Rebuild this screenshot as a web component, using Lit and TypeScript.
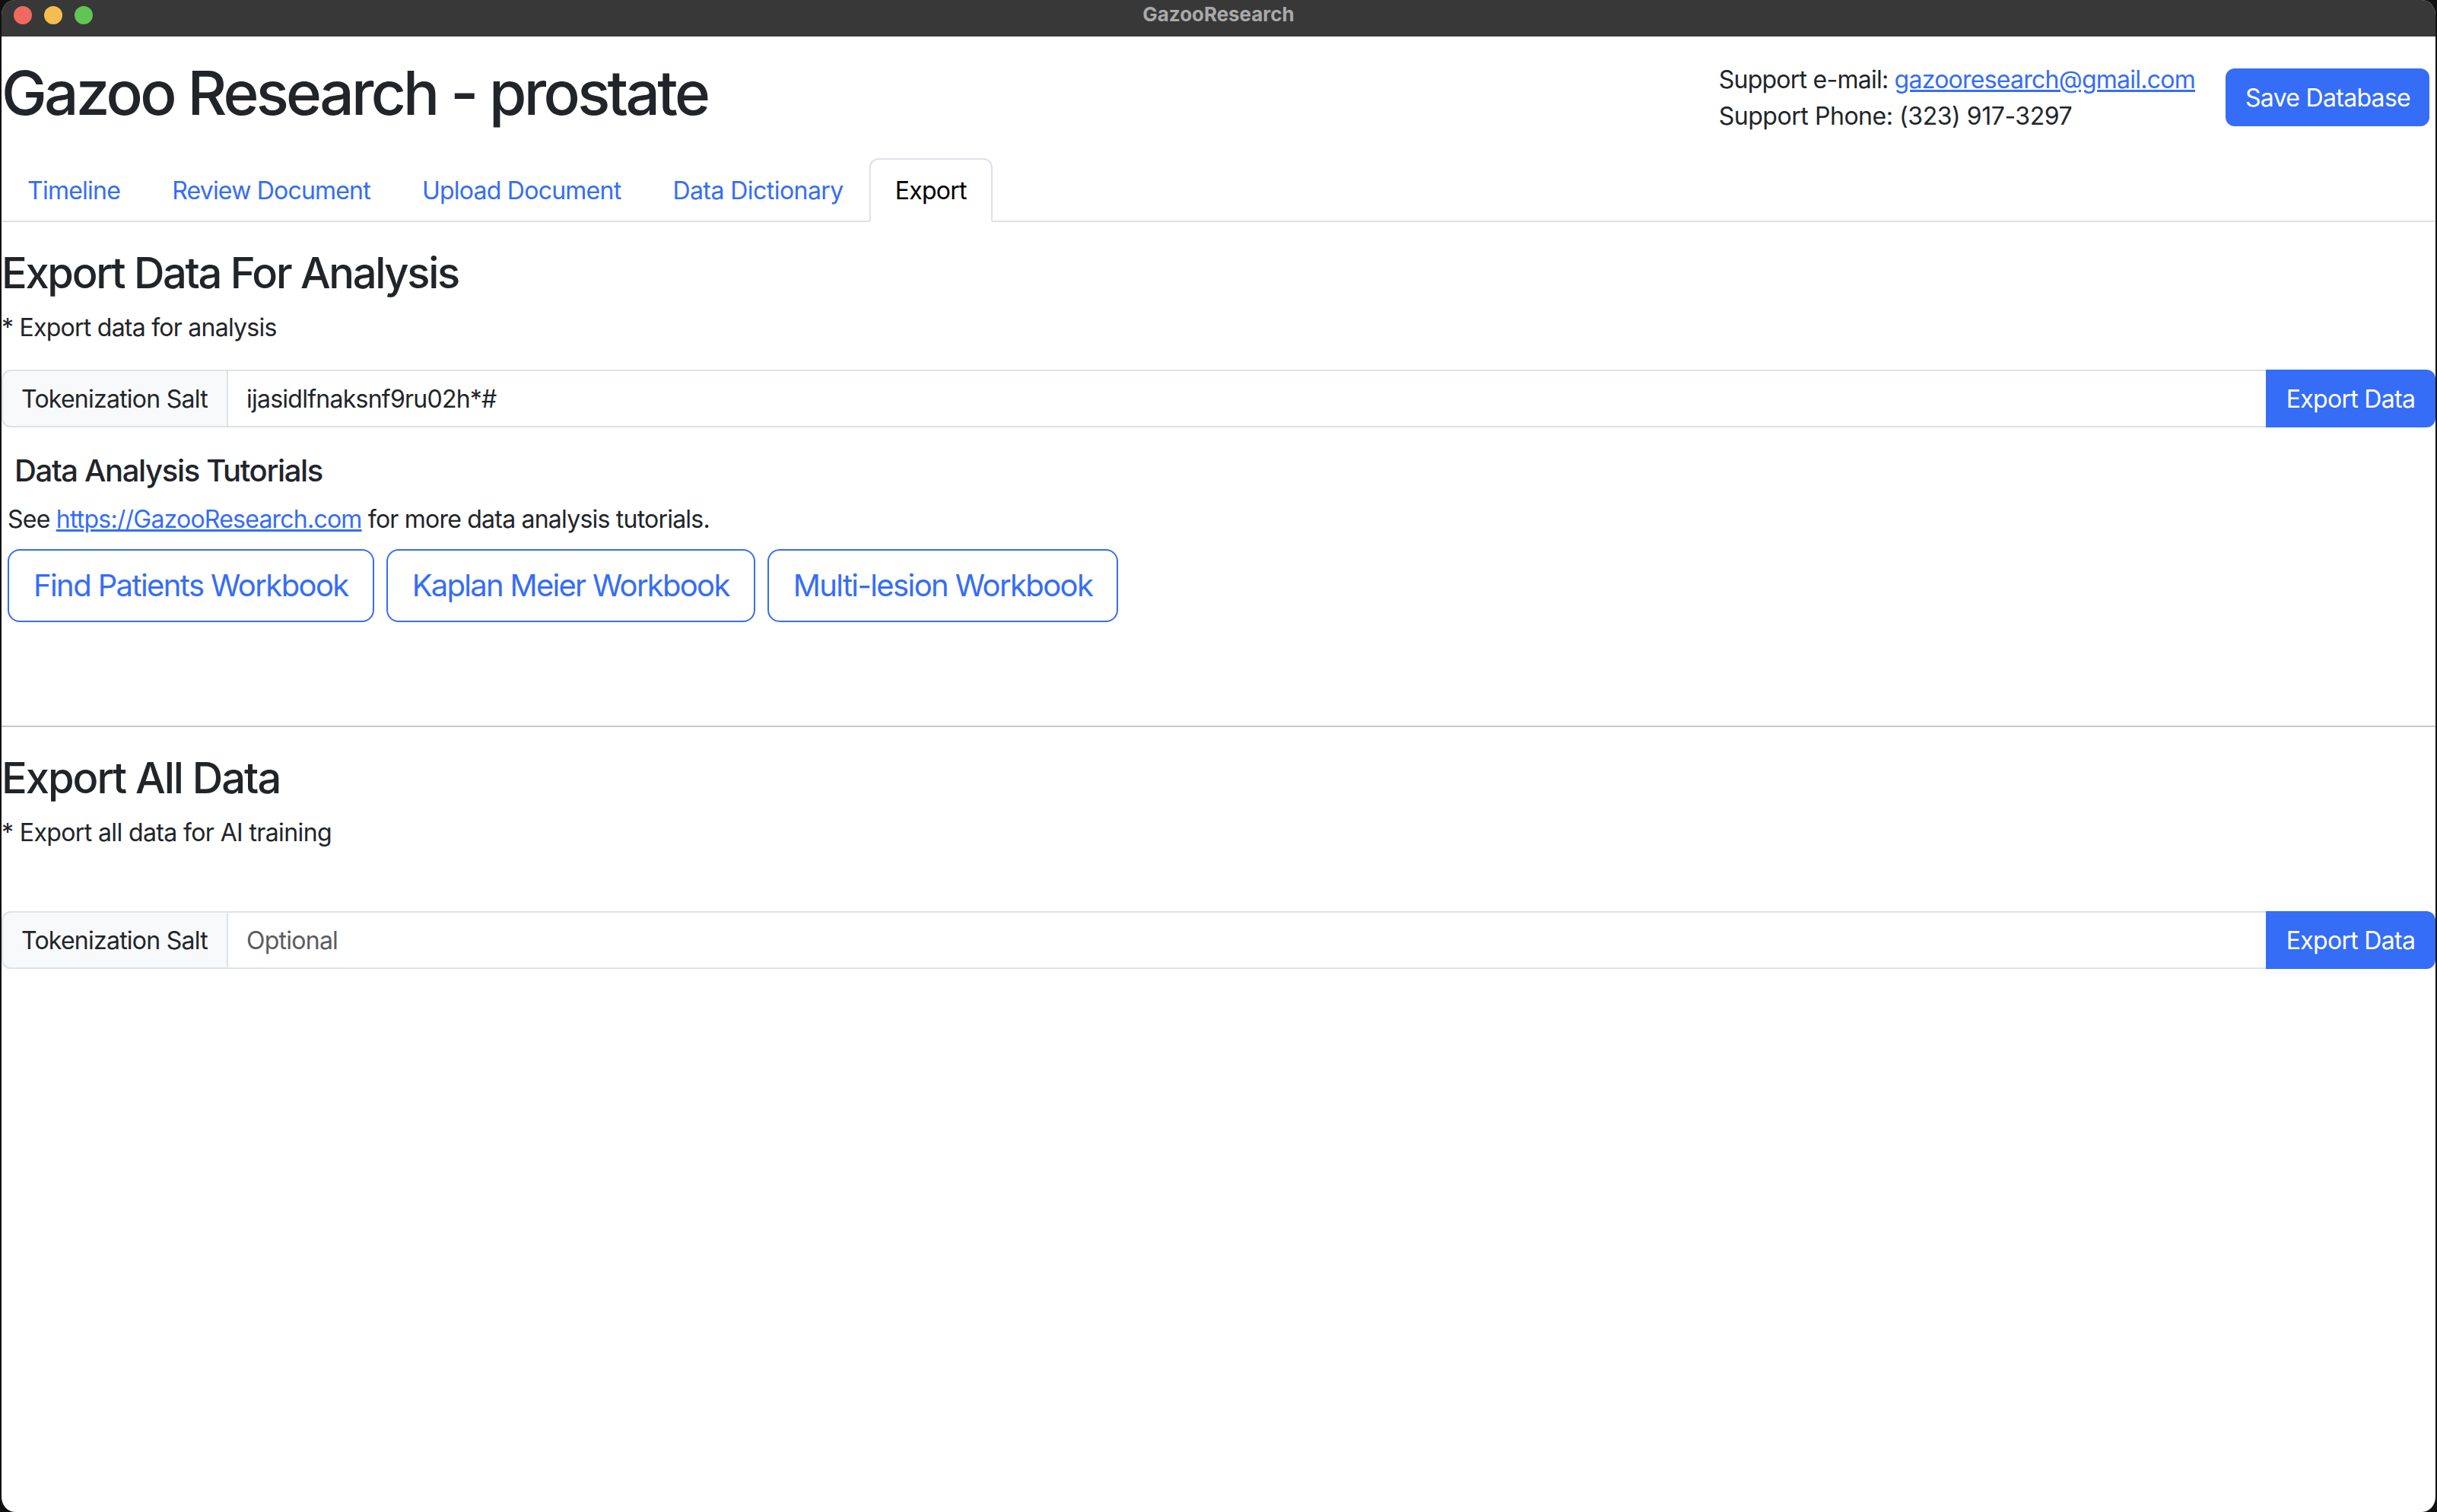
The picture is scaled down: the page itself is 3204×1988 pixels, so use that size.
import { LitElement, css, html } from 'lit'
import { customElement } from 'lit/decorators.js'

const TABS = ['Timeline', 'Review Document', 'Upload Document', 'Data Dictionary', 'Export']
const WORKBOOKS = ['Find Patients Workbook', 'Kaplan Meier Workbook', 'Multi-lesion Workbook']

@customElement('app-root')
export class AppRoot extends LitElement {

    render() {
        return html`
            <div class="window">
                <div class="title-bar">
                    <div class="lights">
                        <span class="light red"></span>
                        <span class="light yellow"></span>
                        <span class="light green"></span>
                    </div>
                    <div class="title">GazooResearch</div>
                </div>

                <header class="header">
                    <h1>Gazoo Research - prostate</h1>
                    <div class="support">
                        <div>Support e-mail: <a href="#">gazooresearch@gmail.com</a></div>
                        <div class="phone">Support Phone: (323) 917-3297</div>
                    </div>
                    <button class="btn save">Save Database</button>
                </header>

                <nav class="tabs">
                    ${TABS.map(tab => html`<a class="tab ${tab === 'Export' ? 'active' : ''}" href="#">${tab}</a>`)}
                </nav>

                <section class="analysis">
                    <h3>Export Data For Analysis</h3>
                    <p class="note">* Export data for analysis</p>
                    ${this._saltRow('ijasidlfnaksnf9ru02h*#')}
                    <h5>Data Analysis Tutorials</h5>
                    <p class="see">See <a href="#">https://GazooResearch.com</a> for more data analysis tutorials.</p>
                    <div class="workbooks">
                        ${WORKBOOKS.map(name => html`<button class="btn-outline">${name}</button>`)}
                    </div>
                </section>

                <hr />

                <section class="all">
                    <h3>Export All Data</h3>
                    <p class="note">* Export all data for AI training</p>
                    ${this._saltRow('')}
                </section>
            </div>
        `
    }

    private _saltRow(value: string) {
        return html`
            <div class="input-group">
                <span class="input-label">Tokenization Salt</span>
                <input type="text" placeholder="Optional" .value=${value} />
                <button class="btn export">Export Data</button>
            </div>
        `
    }

    static styles = css`
        :host {
            display: block;
            background: #111;
            font-family: Inter, "Liberation Sans", sans-serif;
            font-size: 32px;
            line-height: 48px;
            letter-spacing: -0.75px;
            color: #212529;
        }

        * {
            box-sizing: border-box;
        }

        a {
            color: #356df6;
        }

        .window {
            height: 1988px;
            background: #fff;
            border-left: 2px solid #111;
            border-right: 2px solid #111;
            border-radius: 20px;
            overflow: hidden;
        }

        .title-bar {
            display: grid;
            grid-template-columns: 1fr auto 1fr;
            align-items: center;
            height: 48px;
            margin-left: -2px;
            margin-right: -2px;
            background: #383838;
        }

        .lights {
            display: flex;
            gap: 16px;
            padding-left: 18px;
            margin-top: -8px;
        }

        .light {
            width: 24px;
            height: 24px;
            border-radius: 50%;
        }

        .red { background: #ee6a5f; }
        .yellow { background: #f5bd4f; }
        .green { background: #61c454; }

        .title {
            font-size: 26px;
            line-height: 30px;
            font-weight: 700;
            letter-spacing: -0.05px;
            color: #a9a9a9;
            margin-top: -11px;
        }

        .header {
            display: flex;
            align-items: flex-start;
            height: 160px;
            padding-top: 26px;
        }

        h1 {
            flex: 1;
            margin: 0;
            font-size: 80px;
            line-height: 96px;
            font-weight: 540;
            letter-spacing: -3.7px;
        }

        .support {
            margin-right: 40px;
            margin-top: 7px;
        }

        .phone {
            letter-spacing: -0.45px;
        }

        .btn {
            border: 0;
            color: #fff;
            background: #356df6;
            font: inherit;
            letter-spacing: -0.7px;
            white-space: nowrap;
            height: 76px;
            padding: 0 26px;
        }

        .save {
            margin-top: 16px;
            margin-right: 8px;
            padding-top: 1px;
            border-radius: 12px;
            width: 268px;
            flex: none;
        }

        .tabs {
            display: flex;
            height: 84px;
            border-bottom: 2px solid #dee2e6;
        }

        .tab {
            padding: 17px 32px 15px;
            height: 84px;
            text-decoration: none;
            border: 2px solid transparent;
            border-radius: 12px 12px 0 0;
        }

        .tab:nth-child(2) {
            letter-spacing: -0.8px;
        }

        .tab:nth-child(4) {
            letter-spacing: -0.55px;
        }

        .tab.active {
            color: #000;
            background: #fff;
            border-color: #dee2e6 #dee2e6 #fff;
        }

        h3 {
            margin: 0 0 14px;
            font-size: 56px;
            line-height: 67px;
            font-weight: 540;
            letter-spacing: -2.3px;
        }

        h5 {
            margin: 33px 0 16px 17px;
            font-size: 40px;
            line-height: 48px;
            font-weight: 540;
            letter-spacing: -1.35px;
        }

        p {
            margin: 0;
        }

        .analysis {
            height: 662px;
            padding-top: 34px;
        }

        .note {
            height: 79px;
        }

        .see {
            padding-left: 8px;
            letter-spacing: -0.78px;
        }

        .input-group {
            display: flex;
            height: 76px;
        }

        .input-label {
            flex: none;
            width: 298px;
            padding: 13px 24px 11px;
            white-space: nowrap;
            background: #f8f9fa;
            border: 2px solid #dee2e6;
            border-radius: 12px 0 0 12px;
        }

        input {
            flex: 1;
            min-width: 0;
            margin-left: -2px;
            padding: 13px 24px 11px;
            font: inherit;
            letter-spacing: -0.75px;
            color: #212529;
            background: #fff;
            border: 2px solid #dee2e6;
            border-right: 0;
            outline: 0;
        }

        input::placeholder {
            color: #595c5f;
            opacity: 1;
        }

        .export {
            flex: none;
            width: 223px;
            padding: 2px 0 0;
            border-radius: 0 12px 12px 0;
        }

        .workbooks {
            display: flex;
            gap: 16px;
            padding-left: 8px;
            margin-top: 15px;
        }

        .btn-outline {
            height: 96px;
            padding: 0 32px;
            font: inherit;
            font-size: 40px;
            letter-spacing: -1.6px;
            color: #356df6;
            background: #fff;
            border: 2px solid #356df6;
            border-radius: 16px;
        }

        .btn-outline:nth-child(2) {
            letter-spacing: -1.72px;
        }

        hr {
            margin: 0;
            height: 2px;
            border: 0;
            background: #c8c8c8;
        }

        .all {
            padding-top: 34px;
        }

        .all h3 {
            letter-spacing: -2px;
        }

        .all .note {
            height: 127px;
            letter-spacing: -0.62px;
        }
    `
}

declare global {
    interface HTMLElementTagNameMap {
        'app-root': AppRoot
    }
}
